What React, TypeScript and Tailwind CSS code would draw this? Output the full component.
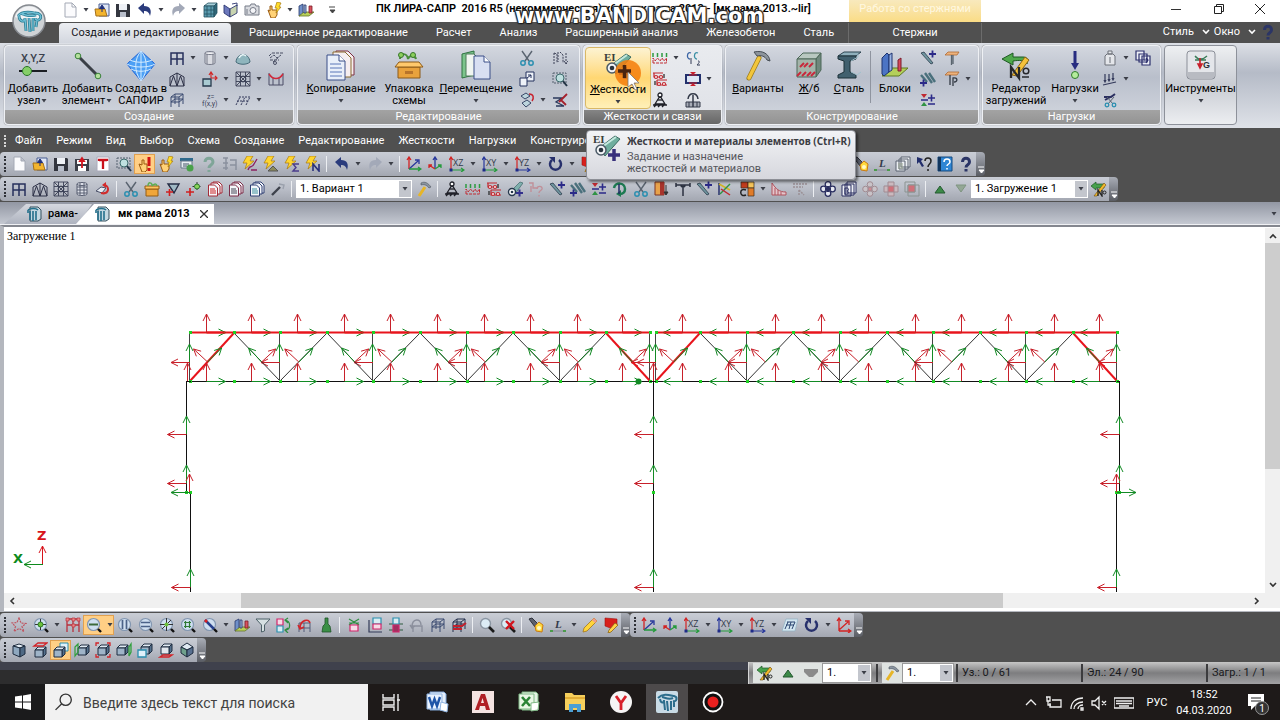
import { FC, ReactNode } from "react";

// Shared pieces for the small toolbar icons (16x16 box)
const Cube: FC<{ dx?: number; dy?: number; fill?: string }> = ({ dx = 0, dy = 0, fill = "#9fb4c8" }) => (
  <g transform={`translate(${dx} ${dy})`} stroke="#1f2d40" strokeWidth="1" strokeLinejoin="round">
    <path d="M3 6l3-3h8l-3 3z" fill="#dfe9f2" />
    <path d="M11 6l3-3v7l-3 3z" fill="#54708c" />
    <path d="M3 6h8v7H3z" fill={fill} />
  </g>
);

const Lens: FC<{ children?: ReactNode }> = ({ children }) => (
  <g>
    <circle cx="7.500" cy="7.500" r="6" fill="#cfdff0" stroke="#8296b0" strokeWidth="1.200" />
    {children}
    <path d="M12 12l3 3" stroke="#111" strokeWidth="2.400" />
  </g>
);

const Axes: FC<{ up: string; right: string; label?: string }> = ({ up, right, label }) => (
  <g fill="none" strokeWidth="1.200">
    <path d="M2 14V2M0 4l2-3 2 3" stroke={up} />
    <path d="M2 14h12M12 12l3 2-3 2" stroke={right} />
    <rect x=".5" y="12.500" width="3" height="3" fill="#1e2b88" />
    {label && (
      <text x="4" y="10" fontSize="9" fill="#333a4a" fontFamily="Open Sans">
        {label}
      </text>
    )}
  </g>
);

const Flash = () => <path d="M5 0h6L8 5h4L3 13l2-6H1z" fill="#ffd52e" stroke="#a87a10" strokeWidth=".7" />;

const Frame: FC<{ color?: string }> = ({ color = "#3a4a70" }) => (
  <path d="M2 15V5l4-3h8v10M2 5h8v10M6 2v10M10 5l4-3M2 10h8l4-3M2 10l4-3h8" fill="none" stroke={color} />
);

const Pages: FC<{ back: string; lines: string }> = ({ back, lines }) => (
  <g fill="#f4f6fa" stroke={back}>
    <path d="M6 1h6l3 3v8H6z" />
    <path d="M4 2h6l3 3v8H4z" />
    <path d="M1.500 4h6l3 3v8h-9z" />
    <path d="M3 8h5M3 10h6M3 12h6" stroke={lines} />
  </g>
);

const icons: Record<string, ReactNode> = {
  page: <path d="M3 1h7l4 4v10H3zM10 1v4h4" fill="#fbfbfd" stroke="#a4a9b5" />,
  open: (
    <g>
      <path d="M5 2h10v12H5z" fill="#dfe6f5" stroke="#4b5f94" />
      <path d="M1 7h10l2 7H2z" fill="#f3b52f" stroke="#a4701a" />
      <path d="M8 10V5M5.500 6.500L8 3l2.500 3.500z" fill="#20307c" stroke="#20307c" />
    </g>
  ),
  save: (
    <g>
      <path d="M1 2h13l1 1v12H1z" fill="#33363f" />
      <path d="M4 2h8v6H4z" fill="#eef1f6" />
      <path d="M5 10h6v5H5z" fill="#b9bfcc" />
    </g>
  ),
  saveModel: (
    <g>
      <path d="M1 3h14v12H1z" fill="#3c3f49" />
      <path d="M3 4h10v4H3zM4 10h8v5H4z" fill="#fff" />
      <path d="M8 12V4M6 5l2-3 2 3z" fill="#d2151f" stroke="#d2151f" strokeWidth="1.800" />
    </g>
  ),
  textPage: (
    <g>
      <path d="M2 1h12v14H2z" fill="#fff" stroke="#aab" />
      <path d="M4 5V4h8v1M8 4v9" fill="none" stroke="#c9101a" strokeWidth="2.300" />
    </g>
  ),
  zoomArea: (
    <g fill="none">
      <path d="M1 2h13v10H1z" stroke="#54616f" strokeDasharray="2 1" />
      <circle cx="8" cy="7" r="4" fill="#bfe0e0" stroke="#3c6a6c" />
      <path d="M11 10l4 5" stroke="#234" strokeWidth="2" />
    </g>
  ),
  handStop: (
    <g>
      <path d="M2 8l3 1V4h2v4h3v6l-2 2H5z" fill="#ffd277" stroke="#9a5a10" />
      <path d="M12 1v9M12 12v3" stroke="#d21414" strokeWidth="3" />
    </g>
  ),
  handFlash: (
    <g>
      <path d="M2 8l2 1V4h2v4h5v5l-2 3H5z" fill="#ffd277" stroke="#9a5a10" />
      <path d="M11 0l4 1-2 4h2l-5 6 1-5H9z" fill="#ffdd2a" stroke="#a87a10" strokeWidth=".7" />
    </g>
  ),
  tableGo: (
    <g>
      <path d="M1 2h13v3H1z" fill="#2f6a8d" />
      <path d="M2 5h11v7H2z" fill="#e8eef2" stroke="#678" />
      <circle cx="11" cy="12" r="3.500" fill="#49a14a" />
      <path d="M4 8h6M4 10h4" stroke="#456" />
    </g>
  ),
  helpFaded: <path d="M5 6c0-5 8-5 8 0 0 3-4 3-4 6M9 14v2" fill="none" stroke="#7fa598" strokeWidth="3" />,
  listFaded: <path d="M2 2h5M2 7h5M2 12h5M9 4h6v10M9 9h6M5 2v12" fill="none" stroke="#8b919f" strokeWidth="1.500" />,
  flashV: (
    <g>
      <Flash />
      <path d="M6 14c2-6 4-1 6-6l3-5M9 14h6" fill="none" stroke="#8a2060" strokeWidth="1.300" />
    </g>
  ),
  flashTri: (
    <g>
      <Flash />
      <path d="M5 15l5-5 5 5z" fill="#8b8a5a" stroke="#555" />
    </g>
  ),
  flashSum: (
    <g>
      <Flash />
      <path d="M15 8H9l3 3.500L9 15h6" fill="none" stroke="#4a3d8c" strokeWidth="1.400" />
    </g>
  ),
  flashN: (
    <g>
      <Flash />
      <path d="M8 15V8l6 7V8" fill="none" stroke="#28307c" strokeWidth="1.600" />
    </g>
  ),
  undo: <path d="M1 6l6-5v3c6 0 8 4 6 10-1-4-3-5-6-5v3z" fill="#2a3b7c" />,
  redo: <path d="M15 6L9 1v3C3 4 1 8 3 14c1-4 3-5 6-5v3z" fill="#a3a9b8" />,
  axes: (
    <g fill="none" strokeWidth="1.300">
      <path d="M3 13V2M1 4l2-3 2 3" stroke="#d22323" />
      <path d="M3 13l9-8M9 4h4v4" stroke="#28389c" />
      <path d="M3 13h11M12 11l3 2-3 2" stroke="#259b3c" />
    </g>
  ),
  axesDown: (
    <g fill="none" strokeWidth="1.300">
      <path d="M8 12V2M6 4l2-3 2 3" stroke="#28389c" />
      <path d="M8 13l-6-4M2 12V9h3" stroke="#d22323" />
      <path d="M8 13l6-4M14 12V9h-3" stroke="#259b3c" />
    </g>
  ),
  axesRed: (
    <g fill="none" strokeWidth="1.300" stroke="#d22323">
      <path d="M3 14V2M1 4l2-3 2 3M3 13l9-8M9 4h4v4M3 14h11M12 12l3 2-3 2" />
    </g>
  ),
  xz: <Axes up="#d22323" right="#259b3c" label="XZ" />,
  xy: <Axes up="#28389c" right="#259b3c" label="XY" />,
  yz: <Axes up="#d22323" right="#28389c" label="YZ" />,
  rotate: (
    <g>
      <path d="M4 4a5.500 5.500 0 107 0" fill="none" stroke="#27306c" strokeWidth="2.500" />
      <path d="M1 1h6v6z" fill="#27306c" />
    </g>
  ),
  pencilRed: (
    <g>
      <path d="M2 1l12 1v6l-4 4-8-3z" fill="#d8201c" stroke="#a01212" strokeWidth=".6" />
      <path d="M12 6l3 2-7 7-3 1 1-3z" fill="#ffd24a" stroke="#8c6413" strokeWidth=".8" />
    </g>
  ),
  torch: (
    <g>
      <path d="M1 2l3-1 6 6-3 3z" fill="#5c606c" stroke="#30333c" />
      <path d="M7 9l4-4 4 3-1 7-6-1z" fill="#ffd93d" stroke="#c97a12" />
      <circle cx="11" cy="11" r="2" fill="#fff8c8" />
    </g>
  ),
  length: (
    <g>
      <text x="5" y="11" fontSize="11" fontStyle="italic" fontFamily="Liberation Serif" fontWeight="bold" fill="#333a4a">
        L
      </text>
      <path d="M2 14h12" stroke="#889" />
      <path d="M0 13h3v2H0zM13 13h3v2h-3z" fill="#4b9b4b" />
    </g>
  ),
  windows: (
    <g fill="#eceff3" stroke="#5b6270">
      <path d="M6 1h9v10H6zM4 3h9v10H4zM1 5h9v10H1z" />
      <path d="M3 8h5M3 10h5M3 12h5" stroke="#97a38f" />
    </g>
  ),
  arrowHelp: (
    <g>
      <path d="M1 1l6 2-2 2 3 5-2 1-3-5-2 2z" fill="#222e6c" />
      <path d="M9 5c0-4 6-4 6 0 0 3-3 3-3 6M12 13v2" fill="none" stroke="#222" strokeWidth="1.500" />
    </g>
  ),
  bookHelp: (
    <g>
      <path d="M1 1h14v14H1z" fill="#2f86d4" stroke="#174a80" />
      <path d="M1 1h3v14H1z" fill="#12375f" />
      <path d="M7 6c0-4 6-4 6 0 0 2-3 2-3 4M10 12v1.500" fill="none" stroke="#fff" strokeWidth="1.500" />
    </g>
  ),
  help: <path d="M4.500 6c0-5 7-5 7 0 0 3-3.500 2.500-3.500 5.500M8 13v2.500" fill="none" stroke="#2b3566" strokeWidth="3" />,
  grid: (
    <g fill="none" stroke="#27305c" strokeWidth="1.500">
      <path d="M2 15V3h12v12M8 3v12M2 9h12" />
    </g>
  ),
  truss: <path d="M1 15V6l7-4 7 4v9M1 15L4.500 5 8 15l3.500-10L15 15M1 15h14M8 2v13" fill="none" stroke="#2b2f45" />,
  mesh: (
    <g fill="none" stroke="#3a3f55" strokeWidth=".9">
      <path d="M1 1h14v14H1zM1 5.500h14M1 10.500h14M5.500 1v14M10.500 1v14M1 1l14 14M15 1L1 15" />
      <circle cx="8" cy="8" r="3" />
    </g>
  ),
  cylinder: (
    <g fill="#dfe2ea" stroke="#4c5266" strokeWidth=".9">
      <path d="M3 3c0-2 10-2 10 0v10c0 2-10 2-10 0z" />
      <path d="M3 6h10M3 9h10M3 12h10M6 2v12M10 2v12M3 3c0 2 10 2 10 0" fill="none" />
    </g>
  ),
  tube: (
    <g stroke="#6c7080" strokeWidth=".9">
      <path d="M3 3c0-2 10-2 10 0v10c0 2-10 2-10 0z" fill="#d9dbe1" />
      <path d="M3 3c0 2 10 2 10 0" fill="#f5f6f8" />
      <path d="M5 4v10M11 4v10" />
    </g>
  ),
  dome: (
    <g>
      <path d="M1 12C2 2 14 2 15 12c-3 3-11 3-14 0z" fill="#8fb5bd" stroke="#466a78" />
      <path d="M4 8c2-4 5-4 7-2" fill="none" stroke="#e8f5f7" strokeWidth="1.500" />
    </g>
  ),
  revolve: (
    <g>
      <path d="M1 10l5-4 5 1-4 5z" fill="#e8ecf2" stroke="#4a5068" />
      <path d="M6 12c8 2 9-6 4-8" fill="none" stroke="#d22b2b" strokeWidth="2" />
      <path d="M11 1L7 4l4 3z" fill="#d22b2b" />
    </g>
  ),
  nodes: (
    <g fill="none" stroke="#3c4258" strokeWidth=".9">
      <path d="M4 3h11M1 6l3-3M2 8l4-3 3 3 4-3M2 10h9M5 12l6-5" strokeDasharray="3 1" />
      <circle cx="7" cy="13" r="1.500" />
    </g>
  ),
  cubeMove: (
    <g>
      <path d="M1 8h8v7H1z" fill="#a9cbd2" stroke="#26394c" strokeWidth="1.300" />
      <path d="M9 7V2M7 4l2-3 2 3M9 7h6M13 5l2 2-2 2" fill="none" stroke="#d02828" strokeWidth="1.200" />
    </g>
  ),
  arch: (
    <g fill="none">
      <path d="M1 2v12h14V2M5 7v7M11 7v7" stroke="#4a4c66" />
      <path d="M1 3c4 6 10 6 14 0" stroke="#d0283a" strokeWidth="1.500" />
    </g>
  ),
  formula: (
    <g fill="#3c4358" fontFamily="Roboto" fontSize="7">
      <text x="5" y="7">z=</text>
      <text x="0" y="14">f(x,y)</text>
    </g>
  ),
  slab: <path d="M4 5h11M1 13L5 5M6 13l4-8M11 13l4-8M2 9h12" fill="none" stroke="#33395a" strokeDasharray="2 1" />,
  scissors: (
    <g fill="none">
      <path d="M3 1l7 10M13 1L6 11" stroke="#5a6470" strokeWidth="1.400" />
      <circle cx="4" cy="13" r="2.200" stroke="#2c8fb0" strokeWidth="1.500" />
      <circle cx="12" cy="13" r="2.200" stroke="#2c8fb0" strokeWidth="1.500" />
    </g>
  ),
  box: (
    <g>
      <path d="M2 8h12v7H2z" fill="#f0a63a" stroke="#945d14" />
      <path d="M1 5h14v3H1z" fill="#ffc45e" stroke="#945d14" />
      <path d="M4 5c0-5 4-3 4-1s4-4 5 1" fill="none" stroke="#5fae52" strokeWidth="1.500" />
    </g>
  ),
  triMark: (
    <g>
      <path d="M3 3h11L9 12z" fill="#9fb8c4" stroke="#242c44" strokeWidth="1.400" />
      <path d="M1 11h7M4.500 8v7" stroke="#d02020" strokeWidth="1.600" />
    </g>
  ),
  nodePlus: (
    <g>
      <path d="M11 1v9M6.500 5.500h9" stroke="#333" strokeDasharray="2 1" />
      <circle cx="11" cy="5.500" r="2.500" fill="#8bd45c" stroke="#2b7a28" />
      <path d="M0 11h8M4 7v8" stroke="#d02020" strokeWidth="1.600" />
    </g>
  ),
  copyRed: <Pages back="#a42c38" lines="#c22" />,
  copyDark: <Pages back="#7c2c48" lines="#445" />,
  copyBlue: <Pages back="#2e3f73" lines="#3b8f9c" />,
  brush: (
    <g fill="none">
      <path d="M2 14l8-8" stroke="#3e424c" strokeWidth="2.400" />
      <path d="M9 3l5 1-1 4" stroke="#9aa0ac" strokeWidth="1.400" />
    </g>
  ),
  hammer: (
    <g>
      <path d="M3 15l6-9" stroke="#e6b528" strokeWidth="3" />
      <path d="M5 2c4-2 7 0 10 4l-2 1c-2-3-5-4-8-3z" fill="#8a94a0" stroke="#4c545e" strokeWidth=".6" />
    </g>
  ),
  support: (
    <g fill="none" stroke="#1f2028" strokeWidth="1.300">
      <path d="M8 4L3 12h10zM1 13h14M2 15l2-2M6 15l2-2M10 15l2-2" />
      <circle cx="8" cy="3" r="2" fill="#fff" />
      <path d="M5.500 8h5" />
    </g>
  ),
  loadTop: (
    <g fill="none">
      <path d="M1 7V3M5.500 7V3M10 7V3M14.500 7V3" stroke="#2e9b42" strokeWidth="1.500" />
      <path d="M1 13V8l2 3 2.500-3L8 11l2-3 2 3 2.500-3v5z" stroke="#c02a32" strokeDasharray="3 1" />
    </g>
  ),
  springs: (
    <g fill="none" stroke="#c2272f" strokeWidth="1.200">
      <path d="M1 2h10M2 2v4h9M5 9h10M5 9v5h10" />
      <circle cx="4" cy="6" r="1.500" fill="#fff" />
      <circle cx="9" cy="6" r="1.500" fill="#fff" />
      <circle cx="7" cy="13" r="1.500" fill="#fff" />
      <circle cx="12" cy="13" r="1.500" fill="#fff" />
      <path d="M12 3v4M3 10v4" stroke="#222" />
    </g>
  ),
  ei: (
    <g>
      <path d="M4 10l9-9 3 1-8 11z" fill="#7fb0ae" stroke="#3d6668" strokeWidth=".7" />
      <circle cx="5" cy="11" r="3.500" fill="#fff" stroke="#26384c" strokeWidth="1.400" />
      <circle cx="5" cy="11" r="1.300" fill="#26384c" />
      <path d="M9 12h7M12.500 8.500v7" stroke="#33308c" strokeWidth="2" />
    </g>
  ),
  hingeFaded: (
    <g fill="none" stroke="#c08f98" strokeWidth="1.400">
      <path d="M1 2h4v5h5M3 5v6M9 8c0-4 6-3 5 0-1 2-3 2-3 4M11 14v1.500" />
    </g>
  ),
  barPlus: (
    <g>
      <path d="M1 3l3-1 9 11-2 1z" fill="#6f959f" stroke="#2c3c4c" strokeWidth=".8" />
      <path d="M9 4h7M12.500 .5v7" stroke="#2b2a88" strokeWidth="1.800" />
    </g>
  ),
  hatchPlus: (
    <g>
      <path d="M1 4l6 7M5 2l7 10M9 2l6 9" stroke="#4a707c" strokeWidth="2.400" />
      <path d="M0 12h7M3.500 8.500v7" stroke="#2b2a88" strokeWidth="1.800" />
    </g>
  ),
  plusMinus: (
    <g>
      <path d="M1 2h6L4 6z" fill="#c02a32" />
      <path d="M1 14h6l-3-4z" fill="#2f9344" />
      <path d="M1 8h7M8 12h7M8 6h7M11.500 2.500v7" stroke="#2b2a88" strokeWidth="1.600" />
    </g>
  ),
  turn: (
    <g>
      <path d="M2 7c1-6 11-6 11 1 0 3-2 5-5 5" fill="none" stroke="#1d7a52" strokeWidth="2.500" />
      <path d="M9 9v7l-5-3z" fill="#1d7a52" />
      <path d="M7 3v10" stroke="#222a66" strokeWidth="1.500" />
    </g>
  ),
  gradient: (
    <g>
      <path d="M1 1h9v13H1z" fill="#e8a24a" stroke="#7c3422" />
      <path d="M6 1h4v13H6z" fill="#a8342c" />
      <path d="M12 4v9M10 11l2 3 2-3z" fill="#333" stroke="#333" />
    </g>
  ),
  tJoint: <path d="M1 4h14M1 2v4M15 2v4M8 4v11M6 4a2 2 0 104 0" fill="none" stroke="#2b3140" strokeWidth="1.500" />,
  colorBars: (
    <g fill="none" strokeWidth="1.500">
      <path d="M2 2v12" stroke="#27306c" />
      <path d="M2 3l11 6" stroke="#d2b522" />
      <path d="M3 13L13 3" stroke="#2f9344" />
      <path d="M4 8l9 6" stroke="#c02a32" />
    </g>
  ),
  palette: (
    <g stroke="#3a2c1c" strokeWidth=".7">
      <path d="M2 1h7v6H2z" fill="#c13c1c" />
      <path d="M9 1h6v6H9z" fill="#f6c55a" />
      <path d="M9 7h6v8H9z" fill="#e07b28" />
      <path d="M7 9c-7-3-7 8 0 5" fill="none" stroke="#222" strokeWidth="1.500" />
    </g>
  ),
  chart: <path d="M1 2v12h14v-3c-7 0-10-3-14-9M4 7v7M7 9v5M10 11v3" fill="#e3c6cc" stroke="#b0525c" />,
  dotted: <path d="M1 3h14M1 6h10M7 9l5 5M7 9v5" fill="none" stroke="#9b9095" strokeWidth="1.500" strokeDasharray="2 1" />,
  crossDots: (
    <g fill="#e8eaf2" stroke="#2b2f60" strokeWidth="1.300">
      <circle cx="8" cy="3.500" r="2.800" />
      <circle cx="8" cy="12.500" r="2.800" />
      <circle cx="3.500" cy="8" r="2.800" />
      <circle cx="12.500" cy="8" r="2.800" />
      <path d="M5 8h6M8 5v6" strokeWidth="2" />
    </g>
  ),
  bBook: (
    <g fill="#eef0f5" stroke="#2b2f60">
      <path d="M6 1h9v11H6zM4 3h9v11H4zM1 4h9v11H1z" />
      <path d="M4 7v6h2c2 0 2-3 0-3 2 0 2-3 0-3z" fill="none" />
    </g>
  ),
  crossFaded: (
    <g fill="#c9c3c8" stroke="#a08b92">
      <circle cx="8" cy="3.500" r="2.800" />
      <circle cx="8" cy="12.500" r="2.800" />
      <circle cx="3.500" cy="8" r="2.800" />
      <circle cx="12.500" cy="8" r="2.800" />
      <circle cx="8" cy="8" r="2" fill="#d08a90" />
    </g>
  ),
  crossRed: (
    <g fill="#cbb9be" stroke="#a08b92">
      <path d="M5 1h6v4h4v6h-4v4H5v-4H1V5h4z" />
      <path d="M5 5h6v6H5z" fill="#cf7079" />
    </g>
  ),
  stackRed: (
    <g fill="none" stroke="#8b9391">
      <path d="M1 1h10v10H1zM4 4h11v11H4z" />
      <path d="M4 4h7v7H4z" fill="#cf7079" />
    </g>
  ),
  up: <path d="M3 12l5-7 5 7z" fill="#3c8a48" stroke="#245a30" />,
  down: <path d="M3 4h10l-5 7z" fill="#93a795" stroke="#7f9581" />,
  downGray: <path d="M1 4h14v3l-5 5H6L1 7z" fill="#8b8b8b" />,
  loadNo: (
    <g>
      <path d="M0 5l5-4v2h8v4H5v2z" fill="#46a04c" stroke="#1c5a26" strokeWidth=".7" />
      <path d="M3 15L13 2l2 2L6 15z" fill="#f2b92c" stroke="#6c4a10" strokeWidth=".6" />
      <path d="M7 15V9l4 6V9" fill="none" stroke="#222" strokeWidth="1.300" />
      <circle cx="13.500" cy="11.500" r="1.500" fill="none" stroke="#222" />
    </g>
  ),
  star: <path d="M8 1l2 5 5 .5-4 3 2 5-5-3-5 3 1.500-5L1 6l5-.5z" fill="none" stroke="#bf5560" strokeDasharray="2 1" strokeWidth="1.200" />,
  lensNode: (
    <Lens>
      <path d="M2 7.500h11M7.500 2v11" stroke="#333" />
      <circle cx="7.500" cy="7.500" r="2.500" fill="#6cc23c" stroke="#2b7a28" />
    </Lens>
  ),
  gridRed: (
    <g fill="none">
      <path d="M2 15V2h12v13M8 2v13M2 8h12" stroke="#b8303c" strokeWidth="1.300" />
      <path d="M1 1h3v3H1zM7 1h3v3H7zM12 1h3v3h-3zM7 7h3v3H7z" fill="#e88" stroke="#b8303c" strokeWidth=".7" />
    </g>
  ),
  lensMinus: (
    <Lens>
      <path d="M3 7.500h9" stroke="#3c6a3a" strokeWidth="2" />
    </Lens>
  ),
  lensV: (
    <Lens>
      <path d="M5.500 3v9M9.500 3v9" stroke="#4a6288" strokeWidth="1.700" />
    </Lens>
  ),
  lensH: (
    <Lens>
      <path d="M3 5.500h9M3 9.500h9" stroke="#4a6288" strokeWidth="1.700" />
    </Lens>
  ),
  lensCross: (
    <Lens>
      <path d="M1 7.500h13M7.500 1v13M3 12l9-9" stroke="#333" />
      <circle cx="7.500" cy="7.500" r="2" fill="#6cc23c" />
    </Lens>
  ),
  lensGrid: (
    <Lens>
      <path d="M4 5.500h7M4 9.500h7M5.500 4v7M9.500 4v7" stroke="#2f7a35" strokeWidth="1.200" />
    </Lens>
  ),
  lensBar: (
    <Lens>
      <path d="M3 3l9 9" stroke="#27408c" strokeWidth="2.500" />
      <path d="M3 3l2 2" stroke="#d22" strokeWidth="2.500" />
    </Lens>
  ),
  blocks: (
    <g strokeWidth=".8">
      <path d="M1 4l4-2v10l-4 2z" fill="#6f8fc8" stroke="#27386c" />
      <path d="M1 14h10l5-4H6z" fill="#b8cf58" stroke="#66772a" />
      <path d="M6 3h2v8H6z" fill="#9fb6dd" stroke="#27386c" />
      <path d="M11 4h3v7h-3z" fill="#d8525c" stroke="#7c1c28" />
    </g>
  ),
  funnel: <path d="M1 2h14l-5.500 6v6l-3 1V8z" fill="#d6e0e2" stroke="#4d6168" />,
  swap: (
    <g fill="none" strokeWidth="1.200">
      <path d="M1 2h6v6H1z" stroke="#d2256a" fill="#f6dbe6" />
      <path d="M1 9h6v6H1z" stroke="#2b8fae" fill="#d9edf3" />
      <path d="M9 3c6 1 6 9 1 10M12 1L9 3l3 3M12 11l-3 2 3 3" stroke="#2f8c40" />
    </g>
  ),
  frameUndo: (
    <g fill="none">
      <path d="M2 15V6h11v9M7 6v9M2 11h11" stroke="#555d78" />
      <path d="M3 11c0-8 9-10 10-5M1 8l2 4 4-2" stroke="#d2252a" strokeWidth="1.600" />
    </g>
  ),
  brushGreen: <path d="M7 1h3v6l2 2 1 6H4l1-6 2-2z" fill="#3b8f46" stroke="#1f5428" strokeWidth=".8" />,
  frameX: (
    <g fill="none" strokeWidth="1.200">
      <path d="M3 6h10M3 2l10 6M13 2L3 8" stroke="#2f8c40" />
      <path d="M4 8h8v6H4z" stroke="#d2256a" fill="#f6dbe6" />
    </g>
  ),
  frameAxes: (
    <g fill="none" strokeWidth="1.200">
      <path d="M2 3v12h13" stroke="#333a58" />
      <path d="M6 1h8v6H6z" stroke="#2b8fae" fill="#d9edf3" />
      <path d="M6 7h8v5H6z" stroke="#d2256a" fill="#f6dbe6" />
    </g>
  ),
  frameMid: (
    <g fill="none" strokeWidth="1.200">
      <path d="M1 7h14M1 13h14" stroke="#2f5c40" />
      <path d="M5 1h6v6H5z" stroke="#2b8fae" fill="#d9edf3" />
      <path d="M5 8h6v7H5z" stroke="#d2256a" fill="#a03060" />
    </g>
  ),
  frameFaded: <path d="M4 15V9h9v6M3 10c0-9 9-9 9-2M1 8l2 3 3-2" fill="none" stroke="#8b8f9c" strokeWidth="1.400" />,
  frame3d: <Frame />,
  frame3dRed: (
    <g>
      <Frame color="#24304c" />
      <path d="M2 9h9l4-3M2 12h9" stroke="#c3202c" strokeWidth="2" fill="none" />
    </g>
  ),
  lens: (
    <g>
      <circle cx="6.500" cy="6.500" r="5" fill="#dcecf6" stroke="#8b96a3" strokeWidth="1.400" />
      <path d="M10 10l5 5" stroke="#1a1a1a" strokeWidth="2.600" />
    </g>
  ),
  lensX: (
    <g>
      <circle cx="6.500" cy="6.500" r="5" fill="#dcecf6" stroke="#8b96a3" strokeWidth="1.400" />
      <path d="M10 10l5 5" stroke="#1a1a1a" strokeWidth="2.600" />
      <path d="M6 4l8 8M14 4l-8 8" stroke="#d2151f" strokeWidth="2.400" />
    </g>
  ),
  pencil: (
    <g>
      <path d="M12 1l3 3L5 14l-4 1 1-4z" fill="#ffd53a" stroke="#a4761a" strokeWidth=".8" />
      <path d="M12 1l3 3-2 2-3-3z" fill="#f09c8c" />
    </g>
  ),
  sheet: (
    <g>
      <path d="M4 2h12l-3 12H0z" fill="#d3e6f0" stroke="#8fb0c2" strokeWidth=".7" />
      <path d="M5 5h8M4 8h8M3 12l3-7M7 12l2-7M10 12l3-7" stroke="#2b4570" fill="none" />
    </g>
  ),
  cube: (
    <g stroke="#1f2d40" strokeLinejoin="round">
      <path d="M2 4l6-2 6 2-5 2z" fill="#e4edf5" />
      <path d="M2 4l7 2v9l-7-3z" fill="#8fa8bf" />
      <path d="M9 6l5-2v8l-5 3z" fill="#4f6984" />
    </g>
  ),
  cubeTop: (
    <g>
      <Cube dy={2} />
      <path d="M2 4l4-3h9l-4 3z" fill="none" stroke="#d2252a" strokeWidth="1.300" />
    </g>
  ),
  cubeBack: (
    <g>
      <path d="M7 1h8v8H7z" fill="#dff1fa" stroke="#2b8fae" />
      <Cube dx={-2} dy={2} />
    </g>
  ),
  cubeLeft: (
    <g>
      <Cube dx={1} />
      <path d="M1 5l3-3v8l-3 4z" fill="none" stroke="#2fa03c" strokeWidth="1.200" />
    </g>
  ),
  cubeBox: (
    <g>
      <Cube />
      <path d="M1 4V1h3M12 1h3v3M15 12v3h-3M4 15H1v-3" fill="none" stroke="#d2252a" strokeWidth="1.300" />
    </g>
  ),
  cubeRight: (
    <g>
      <Cube dx={-2} />
      <path d="M13 5l2-3v8l-2 4z" fill="none" stroke="#2fa03c" strokeWidth="1.300" />
    </g>
  ),
  cubeFront: (
    <g>
      <Cube dx={1} dy={-1} />
      <path d="M1 8h8v7H1z" fill="#dff1fa" stroke="#2b8fae" strokeWidth="1.300" />
    </g>
  ),
  cubeBottom: (
    <g>
      <Cube dy={-1} fill="#e2e7ee" />
      <path d="M2 15l3-2h9l-3 2z" fill="none" stroke="#d2252a" strokeWidth="1.300" />
    </g>
  ),
  cubeHex: (
    <g stroke="#1f2d40" strokeLinejoin="round">
      <path d="M8 1l6 4-6 3-6-3z" fill="#dfe9f2" />
      <path d="M2 5l6 3v7l-6-4z" fill="#6fa08c" />
      <path d="M14 5L8 8v7l6-4z" fill="#587090" />
    </g>
  ),
  building: (
    <g stroke="#24505f" strokeWidth=".8">
      <path d="M2 4l4-3h9l-3 3z" fill="#a8d0da" />
      <path d="M2 4h10v11H2z" fill="#5c9cb0" />
      <path d="M12 4l3-3v10l-3 4z" fill="#2f6678" />
      <path d="M5 4v11M9 4v11M2 8h10M2 12h10" />
    </g>
  ),
  book: (
    <g stroke="#2b3570" strokeWidth=".9">
      <path d="M1 3l6 4v8l-6-4z" fill="#6c78bc" />
      <path d="M7 7l7-4v8l-7 4z" fill="#c8d4b0" />
      <path d="M9 2l5-1v3" fill="none" />
    </g>
  ),
  camera: (
    <g stroke="#777c88">
      <path d="M1 4h5l1-2h4l1 2h3v9H1z" fill="#d9dbe0" />
      <circle cx="9" cy="8.500" r="3" fill="#f4f5f8" />
      <path d="M3 7v5" />
    </g>
  ),
  paste: (
    <g stroke="#23305c" fill="#eef2f8">
      <path d="M7 1h8v9H7z" />
      <path d="M1 7h7v8H1z" />
      <path d="M8 7l4-3M12 7V4H9" fill="none" />
    </g>
  ),
  rotateCopy: (
    <g stroke="#2b3a5c" fill="#bcd4dc" strokeWidth=".9">
      <path d="M2 4l5-3 4 3-5 3zM3 11l5-3 4 3-5 4z" />
      <path d="M10 2c5 0 5 4 3 7" fill="none" stroke="#c8202c" strokeWidth="1.500" />
    </g>
  ),
  strip: <path d="M2 3v11M2 3l3 1v9M6 2v10M8 2l3 3v8M14 3v11M12 11l2 3 2-3" fill="none" stroke="#3a3f55" strokeDasharray="2 1" />,
  clean: (
    <g fill="none">
      <path d="M1 6h9l-6 4 8 4H4" stroke="#2b3a5c" strokeWidth="1.300" />
      <path d="M15 2L7 10M9 8l5 5" stroke="#a5202c" strokeWidth="1.800" />
    </g>
  ),
  cc: (
    <g fill="none" strokeWidth="1.300">
      <path d="M6 3C2 1 1 9 5 9" stroke="#3a64a4" />
      <path d="M13 3C9 1 8 9 12 9" stroke="#3a8fa4" />
      <path d="M6 8v6M13 11c3 0 0 3-1 4h3" stroke="#333a55" strokeWidth="1" />
    </g>
  ),
  plate: (
    <g>
      <path d="M1 4h14v8H1z" fill="#dce6f4" stroke="#23306c" strokeWidth="2" />
      <path d="M5 1h6L8 4zM5 15h6l-3-3z" fill="#c8202c" />
      <path d="M4 4h8M4 12h8" stroke="#c8202c" />
    </g>
  ),
  springBase: (
    <g fill="none" stroke="#333948">
      <path d="M1 10h14M1 10v5h14v-5M4 10v5M12 10v5" fill="#a7abb6" />
      <path d="M3 7c1-7 9-7 10 0M8 3v12" strokeWidth="1.500" />
    </g>
  ),
  tOrange: (
    <g>
      <path d="M1 5l3-3h11l-2 3z" fill="#ecb27c" stroke="#b06a34" strokeWidth=".8" />
      <path d="M7.500 5v10M9 5v9" stroke="#59646e" strokeWidth="1.300" />
    </g>
  ),
  ipOrange: (
    <g>
      <path d="M1 4l3-3h11l-2 3z" fill="#ecb27c" stroke="#b06a34" strokeWidth=".8" />
      <path d="M6 4v10M9 15V7c5-1 5 4 1 4" stroke="#333a44" fill="none" strokeWidth="1.300" />
    </g>
  ),
  bottle: (
    <g fill="#e4e6ea" stroke="#6c7078">
      <path d="M3 6l2-2h6l2 2v9H3zM6 1h4v3H6z" />
      <path d="M8 7v6" />
    </g>
  ),
  loadLine: <path d="M3 3v8M7 3v7M11 2v7M2 9l1 2 1-2M6 8l1 2 1-2M10 7l1 2 1-2M1 14l13-3" fill="none" stroke="#33395a" strokeWidth="1.200" />,
  cutLoad: (
    <g fill="none">
      <path d="M2 5h7l4-3M3 8l9-5" stroke="#2b2f60" strokeWidth="2" />
      <path d="M5 5l6 7M12 5l-6 7" stroke="#5a6470" />
      <circle cx="5" cy="13" r="1.800" stroke="#2c8fb0" strokeWidth="1.300" />
      <circle cx="12" cy="13" r="1.800" stroke="#2c8fb0" strokeWidth="1.300" />
    </g>
  ),
  copyFrames: (
    <g fill="#eceef6" stroke="#2b2f6c" strokeWidth="1.200">
      <path d="M1 1h8v9H1zM4 4h8v8H4zM7 6h8v9H7z" />
      <path d="M9 10h4M11 8l2 2-2 3" fill="none" />
    </g>
  ),
};

// Ribbon-size icons (32x32 box)
const bigIcons: Record<string, ReactNode> = {
  node: (
    <g>
      <text x="16" y="12" textAnchor="middle" fontSize="11" fill="#3a3f4c" fontFamily="Roboto" fontWeight="500">
        X,Y,Z
      </text>
      <path d="M2 21h28M10 16v10" stroke="#1c1f24" strokeWidth="2" />
      <circle cx="10" cy="21" r="4.500" fill="#86cf68" stroke="#2f7a2c" />
    </g>
  ),
  element: (
    <g>
      <path d="M6 6l20 20" stroke="#3a3f46" strokeWidth="3" />
      <circle cx="6" cy="6" r="2.800" fill="#b4e09c" stroke="#39803a" />
      <circle cx="26" cy="26" r="2.800" fill="#b4e09c" stroke="#39803a" />
    </g>
  ),
  sapfir: (
    <g fill="#4da0f5" stroke="#1d62d8" strokeLinejoin="round">
      <path d="M16 1L2 14l14 17 14-17z" />
      <path d="M2 14c6 4 22 4 28 0M5 10c6 3 16 3 22 0M16 1C9 9 9 22 16 31M16 1c7 8 7 21 0 30M16 1v30M6 19c6 3 14 3 20 0" fill="none" stroke="#d4ecff" />
    </g>
  ),
  copy: (
    <g stroke="#7c2c40" fill="#f6eef0">
      <path d="M11 1h12l6 6v18H11z" />
      <path d="M8 2h12l6 6v19H8z" stroke="#8a6a30" />
      <path d="M2 5h12l6 6v19H2z" fill="#e9effa" stroke="#3a4e88" />
      <path d="M14 5v6h6" fill="#fff" stroke="#3a4e88" />
      <path d="M5 14h11M5 18h12M5 22h12M5 26h12" stroke="#5b76b8" />
    </g>
  ),
  pack: (
    <g>
      <path d="M7 9c0-7 7-6 8 0 1-4 7-4 8 0" fill="none" stroke="#4a8d3a" strokeWidth="2" />
      <circle cx="8" cy="5" r="2.500" fill="#8ccf5c" stroke="#38762c" />
      <circle cx="20" cy="5" r="2.500" fill="#8ccf5c" stroke="#38762c" />
      <path d="M5 17h22v11H5z" fill="#e9a23c" stroke="#8c5a18" />
      <path d="M6 12h20l4 5H2z" fill="#ffc96c" stroke="#8c5a18" />
      <path d="M12 21h8v3h-8z" fill="#b8742a" />
    </g>
  ),
  move: (
    <g>
      <path d="M2 4l12-3v24L2 28z" fill="#7cc48c" stroke="#2f7240" />
      <path d="M6 4h8l4 4v18H6z" fill="#f0f5f0" stroke="#4d7a58" />
      <path d="M14 6h10l6 6v17H14z" fill="#d8dff2" stroke="#3a4e88" />
      <path d="M24 6v6h6" fill="#fff" stroke="#3a4e88" />
    </g>
  ),
  stiffness: (
    <g>
      <text x="2" y="10" fontSize="11" fontFamily="Liberation Serif" fontWeight="bold" fill="#3a3f3c">
        EI
      </text>
      <path d="M8 15L24 3l5 3-15 17z" fill="#6fae9e" stroke="#3c6c62" />
      <path d="M11 14L25 4" stroke="#c4e8de" strokeWidth="2" />
      <circle cx="10" cy="17" r="5" fill="#f2f4f6" stroke="#4b5a66" strokeWidth="1.500" />
      <circle cx="10" cy="17" r="2.300" fill="#27323c" />
      <path d="M17 22h12M23 16v12" stroke="#38307c" strokeWidth="3.500" />
    </g>
  ),
  hammer: (
    <g>
      <path d="M7 28L17 8" stroke="#9c7a1c" strokeWidth="5" strokeLinecap="round" />
      <path d="M7 28L17 8" stroke="#f2c63c" strokeWidth="3.500" strokeLinecap="round" />
      <path d="M12 2c9-2 15 2 16 9l-3-1c-2-4-6-5-10-4z" fill="#8c949c" stroke="#474e56" />
    </g>
  ),
  concrete: (
    <g>
      <path d="M4 9l6-6h18l-5 6z" fill="#b9c8c0" stroke="#4d6858" />
      <path d="M23 9l5-6v17l-5 7z" fill="#6f887c" stroke="#4d6858" />
      <path d="M4 9h19v18H4z" fill="#a4b4aa" stroke="#4d6858" />
      <path d="M7 17l4-4M11 17l4-4M16 17l4-4M4 26l4-4M9 26l4-4M14 26l4-4M18 26l4-4" stroke="#c8283c" strokeWidth="2" />
    </g>
  ),
  steel: (
    <g>
      <path d="M5 6l6-4h17l-5 4z" fill="#8fb0bc" stroke="#2c4450" />
      <path d="M5 6h18v3l-6 2v11l6 3v3H5v-3l6-3V11L5 9z" fill="#41606e" stroke="#1d3038" />
      <path d="M18 11l7-4v-3M18 22l6 3 4-3" stroke="#9fc0cc" fill="none" />
    </g>
  ),
  blocks: (
    <g>
      <path d="M3 26h17l9-8H12z" fill="#b4cf5a" stroke="#5f7a22" />
      <path d="M3 8l5-5 2 2v17l-5 4-2-2z" fill="#4c74c4" stroke="#1e3470" />
      <path d="M10 5l3-2v17l-3 2z" fill="#9ab4e4" stroke="#1e3470" />
      <path d="M19 10l3-2v13h-3z" fill="#d84a5a" stroke="#7a1c2c" />
    </g>
  ),
  loadEditor: (
    <g>
      <path d="M2 9l11-6v4h10c5 0 5 3 4 7-3-4-7-4-14-3v4z" fill="#4fa84c" stroke="#1f5a24" />
      <path d="M12 25L25 7l4 3-12 16z" fill="#f5c23a" stroke="#8c6413" />
      <path d="M11 28V17l8 11V17" fill="none" stroke="#27282c" strokeWidth="2.300" />
      <circle cx="26" cy="21" r="2.800" fill="none" stroke="#27282c" strokeWidth="1.500" />
      <path d="M22 27h7" stroke="#27282c" strokeWidth="1.500" />
    </g>
  ),
  loads: (
    <g>
      <path d="M16 1v15" stroke="#272c80" strokeWidth="3" />
      <path d="M12 13h8l-4 7z" fill="#272c80" />
      <circle cx="16" cy="25" r="3.500" fill="#b4ec9c" stroke="#2f7a2c" />
    </g>
  ),
  tools: (
    <g>
      <rect x="2" y="1" width="28" height="28" rx="3" fill="#e4e6ea" stroke="#8b8f98" />
      <path d="M3 22h26v6H3z" fill="#b8bbc2" />
      <path d="M10 6c3 4 8 4 12 0M10 10h11" stroke="#3c7c5a" fill="none" strokeWidth="1.300" />
      <path d="M15 8v8M13 14l2 4 2-4z" stroke="#c8202c" fill="#c8202c" strokeWidth="1.600" />
      <text x="18" y="18" fontSize="9" fontWeight="bold" fill="#2d3038" fontFamily="Liberation Sans">
        G
      </text>
    </g>
  ),
};

const Icon: FC<{ name: string }> = ({ name }) => (
  <svg className="h-4 w-4 shrink-0" viewBox="0 0 16 16" aria-hidden="true">
    {icons[name]}
  </svg>
);

const Caret = () => (
  <svg className="h-1 w-2 shrink-0 text-[#3b3e47]" viewBox="0 0 8 4" aria-hidden="true">
    <path d="M1.500 0h5L4 3.500z" fill="currentColor" />
  </svg>
);

const Chevron: FC<{ d: string; className?: string }> = ({ d, className = "text-[#333]" }) => (
  <svg className={`h-2 w-2 shrink-0 ${className}`} viewBox="0 0 8 8" aria-hidden="true">
    <path d={d} fill="none" stroke="currentColor" strokeWidth="1.600" />
  </svg>
);

const Sep = () => (
  <div className="flex w-[7px] shrink-0 justify-center">
    <div className="h-4 w-px bg-[#eceef2]"></div>
  </div>
);

// "name" is a button, "name+" a button with a menu, "name!" a pressed one, "|" a separator
const Tools: FC<{ items: string }> = ({ items }) => (
  <>
    {items.split(" ").map((item, i) => {
      if (item === "|") return <Sep key={i} />;
      const name = item.replace(/[+!]/g, "");
      const pressed = item.includes("!");
      if (item.includes("+"))
        return (
          <button
            key={i}
            aria-label={name}
            className={
              pressed
                ? "flex h-5 w-[31px] shrink-0 items-center border border-[#e0a050] bg-[#ffcf85] pl-0.5"
                : "flex h-5 w-[33px] shrink-0 items-center pl-1"
            }
          >
            <Icon name={name} />
            <span className="ml-1">
              <Caret />
            </span>
          </button>
        );
      return (
        <button
          key={i}
          aria-label={name}
          className={
            pressed
              ? "flex h-5 w-[21px] shrink-0 items-center justify-center border border-[#e0a050] bg-[#ffcf85]"
              : "flex h-5 w-[21px] shrink-0 items-center justify-center"
          }
        >
          <Icon name={name} />
        </button>
      );
    })}
  </>
);

const Toolbar: FC<{ children: ReactNode }> = ({ children }) => (
  <div className="flex h-6 shrink-0">
    <div className="flex items-center rounded-l-sm bg-linear-to-b from-[#c9cdd5] via-[#b9bdc7] to-[#a3a7b1]">
      <div className="mr-0.5 ml-1 h-4 w-0 border-l-2 border-dotted border-[#2e3036]"></div>
      {children}
    </div>
    <div className="flex w-[9px] items-end justify-center rounded-r-sm bg-linear-to-b from-[#a9adb6] to-[#5a5d64] pb-0.5">
      <svg className="h-2 w-2" viewBox="0 0 8 8" aria-hidden="true">
        <path d="M1 1h6M2 4h5L4.500 7z" stroke="#fff" fill="#fff" />
      </svg>
    </div>
  </div>
);

const Combo: FC<{ label: string; value: string; className: string }> = ({ label, value, className }) => (
  <div className={`relative shrink-0 ${className}`}>
    <select aria-label={label} className="h-full w-full appearance-none bg-white px-1 text-[11px] leading-4 text-black">
      <option>{value}</option>
    </select>
    <span className="pointer-events-none absolute inset-y-px right-px flex w-3 items-center justify-center bg-[#c3c6cd]">
      <Caret />
    </span>
  </div>
);

type BigProps = { icon: string; lines: string[]; menu?: boolean; hotkey?: boolean; className: string };

const BigButton: FC<BigProps> = ({ icon, lines, menu, hotkey, className }) => (
  <button className={`flex h-[62px] shrink-0 flex-col items-center pt-[3px] whitespace-nowrap ${className}`}>
    <svg className="h-8 w-8 shrink-0" viewBox="0 0 32 32" aria-hidden="true">
      {bigIcons[icon]}
    </svg>
    <span className="leading-[13px]">
      {hotkey ? (
        <>
          <u>{lines[0][0]}</u>
          {lines[0].slice(1)}
        </>
      ) : (
        lines[0]
      )}
    </span>
    <span className="flex h-3 items-center leading-3">
      {lines[1]}
      {menu && <Caret />}
    </span>
  </button>
);

// Columns of small buttons; a trailing "+" means the button has a menu
const SmallGrid: FC<{ columns: string[][] }> = ({ columns }) => (
  <div className="flex shrink-0">
    {columns.map((column, i) => (
      <div key={i} className="flex w-[33px] flex-col">
        {column.map((item) => (
          <button key={item} aria-label={item.replace("+", "")} className="flex h-[21px] items-center gap-1 pl-px">
            <Icon name={item.replace("+", "")} />
            {item.endsWith("+") && <Caret />}
          </button>
        ))}
      </div>
    ))}
  </div>
);

const Group: FC<{ title: string; className: string; active?: boolean; children: ReactNode }> = ({
  title,
  className,
  active,
  children,
}) => (
  <section
    className={`relative flex h-20 shrink-0 flex-col rounded-sm border border-[#eef0f4] shadow-[0_0_1px_#555] ${className} ${
      active ? "bg-linear-to-b from-[#e9ebef] to-[#dfe1e7]" : "bg-linear-to-b from-[#d3d7df] via-[#b9bfcb] via-40% to-[#d5d9e1]"
    }`}
  >
    <div className="flex h-16 pt-px">{children}</div>
    <h2
      className={`flex flex-1 items-center justify-center rounded-b-sm leading-3 text-white ${
        active ? "bg-linear-to-b from-[#858585] to-[#666]" : "bg-linear-to-b from-[#a3a3a3] to-[#939393]"
      }`}
    >
      {title}
    </h2>
  </section>
);

const Watermark = () => (
  <div className="pointer-events-none absolute top-1 left-[515px] font-['DejaVu_Sans'] text-[21px] leading-6 font-bold whitespace-nowrap text-white [text-shadow:0_0_2px_#000,1px_1px_1px_#222,-1px_-1px_1px_#333,1px_-1px_1px_#333,-1px_1px_1px_#333]">
    www.BANDICAM.com
  </div>
);

const TitleBar = () => (
  <header className="relative flex h-[22px] shrink-0 items-center bg-white pl-[58px]">
    <div className="flex items-center pb-0.5">
      <Tools items="page+ open save undo+ redo+ building book camera handFlash+ blocks" />
      <button aria-label="Настройка панели" className="ml-3">
        <svg className="h-2 w-2" viewBox="0 0 8 8">
          <path d="M1 1h6M2 4h5L4.500 7z" stroke="#444" fill="#444" />
        </svg>
      </button>
    </div>
    <h1 className="ml-10 pb-1 text-[11px] leading-4 font-semibold whitespace-pre text-black">
      ПК ЛИРА-САПР  2016 R5 (некоммерческая) x64 - мк рама 2013 - [мк рама 2013.~lir]
    </h1>
    <div className="ml-auto flex pb-1">
      <button aria-label="Свернуть" className="flex w-[43px] justify-center">
        <svg className="h-3 w-3" viewBox="0 0 12 12">
          <path d="M1 6.500h10" stroke="#333" />
        </svg>
      </button>
      <button aria-label="Восстановить" className="flex w-[43px] justify-center">
        <svg className="h-3 w-3" viewBox="0 0 12 12" fill="none" stroke="#222">
          <path d="M1.500 3.500h7v7h-7zM3.500 3.500v-2h7v7h-2" />
        </svg>
      </button>
      <button aria-label="Закрыть" className="flex w-10 justify-center">
        <svg className="h-3 w-3" viewBox="0 0 12 12" fill="none" stroke="#222">
          <path d="M1 1l10 10M11 1L1 11" />
        </svg>
      </button>
    </div>
    <button aria-label="Меню приложения" className="absolute top-1 left-3 z-10">
      <svg className="h-[34px] w-[34px]" viewBox="0 0 34 34">
        <circle cx="17" cy="17" r="16" fill="#cfd3d6" stroke="#85898f" strokeWidth="1.500" />
        <path d="M3 13a14.500 14.500 0 0128 0c-8 4-20 4-28 0z" fill="#f2f3f5" />
        <path d="M6 12c4-5 12-4 17-3 5 0 7 3 5 6-2 2-5 1-5-1M7 12c0 5 5 7 6 3M10 10c5 1 9 3 14 1M13 14l1 13M17 14l1 14M21 14v13M25 16l-1 7" fill="none" stroke="#26788f" strokeWidth="2.800" />
        <path d="M6 12c4-5 12-4 17-3 5 0 7 3 5 6-2 2-5 1-5-1M7 12c0 5 5 7 6 3M10 10c5 1 9 3 14 1M13 14l1 13M17 14l1 14M21 14v13M25 16l-1 7" fill="none" stroke="#6fc0d6" strokeWidth="1.300" />
      </svg>
    </button>
    <Watermark />
  </header>
);

const ribbonTabs = ["Расширенное редактирование", "Расчет", "Анализ", "Расширенный анализ", "Железобетон", "Сталь"];

const RibbonTabs = () => (
  <nav className="flex h-[21px] shrink-0 items-end bg-[#505050] pl-[59px] text-white">
    <button className="h-5 w-[172px] shrink-0 rounded-t-sm bg-linear-to-b from-[#eceef2] to-[#d3d7df] whitespace-nowrap text-[#15171c]">
      Создание и редактирование
    </button>
    <div className="flex h-5 items-center pl-1">
      {ribbonTabs.map((tab) => (
        <button key={tab} className="px-[14px] leading-4 whitespace-nowrap">
          {tab}
        </button>
      ))}
    </div>
    <div className="relative flex h-5 w-[134px] shrink-0 items-center justify-center border-x border-[#6c6c6c]">
      <button>Стержни</button>
      <span className="absolute bottom-full left-0 mb-px flex h-[22px] w-full items-start justify-center bg-linear-to-b from-[#f8e9bd] to-[#fadc85] pt-px whitespace-nowrap text-[#fff8e0]">
        Работа со стержнями
      </span>
    </div>
    <div className="ml-auto flex h-[22px] items-center gap-1 pr-1 whitespace-nowrap">
      <button className="flex items-center gap-2">
        Стиль <Chevron d="M1 2l3 3 3-3" className="text-white" />
      </button>
      <button className="flex items-center gap-2">
        Окно <Chevron d="M1 2l3 3 3-3" className="text-white" />
      </button>
      <button aria-label="Справка" className="flex items-center">
        <Icon name="help" />
      </button>
    </div>
  </nav>
);

const Tooltip = () => (
  <div
    role="tooltip"
    className="absolute top-[84px] left-0.5 z-20 flex h-[50px] w-[270px] rounded-sm border border-[#8d8f96] bg-linear-to-b from-[#f2f3f6] to-[#d6d7dd] px-1 shadow-[2px_2px_3px_rgba(0,0,0,0.5)]"
  >
    <svg className="mt-0.5 h-8 w-8 shrink-0" viewBox="0 0 32 32" aria-hidden="true">
      {bigIcons.stiffness}
    </svg>
    <div className="pl-1 whitespace-nowrap text-[#55565c]">
      <p className="font-['Noto_Sans'] text-[10px] leading-5 font-bold text-[#3c3d44]">
        Жесткости и материалы элементов (Ctrl+R)
      </p>
      <p className="leading-3">Задание и назначение</p>
      <p className="leading-3">жесткостей и материалов</p>
    </div>
  </div>
);

const Cursor = () => (
  <svg className="pointer-events-none absolute top-3 left-7 h-8 w-8" viewBox="0 0 32 32" aria-hidden="true">
    <circle cx="15" cy="14" r="13" fill="#f57c0a" fillOpacity=".85" />
    <path d="M5 12h13M11.500 6v13" stroke="#4a2410" strokeWidth="3.500" />
    <path d="M15 13v15l4-3 3 6 2-1-3-6h5z" fill="#fff" stroke="#777" strokeWidth=".8" />
  </svg>
);

const Ribbon = () => (
  <div className="flex h-[85px] shrink-0 gap-[3px] bg-linear-to-b from-[#dde0e6] via-[#b5bbc7] via-35% to-[#dfe2e8] pt-0.5 pl-1 text-black">
    <Group title="Создание" className="w-[290px]">
      <BigButton icon="node" lines={["Добавить", "узел"]} menu className="w-[56px]" />
      <BigButton icon="element" lines={["Добавить", "элемент"]} menu className="w-[53px]" />
      <BigButton icon="sapfir" lines={["Создать в", "САПФИР"]} className="w-[54px]" />
      <SmallGrid
        columns={[
          ["grid+", "truss", "frame3d"],
          ["tube+", "cubeMove+", "formula+"],
          ["dome", "mesh+", "slab+"],
          ["nodes", "arch"],
        ]}
      />
    </Group>
    <Group title="Редактирование" className="w-[283px]">
      <BigButton icon="copy" lines={["Копирование"]} menu hotkey className="w-[86px]" />
      <BigButton icon="pack" lines={["Упаковка", "схемы"]} className="w-[50px]" />
      <BigButton icon="move" lines={["Перемещение"]} menu hotkey className="w-[84px]" />
      <SmallGrid
        columns={[
          ["scissors", "paste", "rotateCopy+"],
          ["strip", "zoomArea", "clean"],
        ]}
      />
    </Group>
    <Group title="Жесткости и связи" className="w-[139px]" active>
      <div className="relative ml-px shrink-0">
        <BigButton
          icon="stiffness"
          lines={["Жесткости"]}
          menu
          hotkey
          className="w-[66px] rounded-sm border border-[#d9b866] bg-linear-to-b from-[#fdf3d2] via-[#ffd772] via-50% to-[#fff0b8]"
        />
        <Cursor />
      </div>
      <SmallGrid
        columns={[
          ["loadTop+", "springs", "support"],
          ["cc", "plate+", "springBase"],
        ]}
      />
      <Tooltip />
    </Group>
    <Group title="Конструирование" className="w-[254px]">
      <BigButton icon="hammer" lines={["Варианты"]} hotkey className="w-[64px]" />
      <BigButton icon="concrete" lines={["Ж/б"]} hotkey className="w-[38px]" />
      <BigButton icon="steel" lines={["Сталь"]} hotkey className="w-[42px]" />
      <div className="mt-1 h-13 w-px shrink-0 bg-[#8f949f]"></div>
      <BigButton icon="blocks" lines={["Блоки"]} className="w-[48px]" />
      <div className="flex w-6 shrink-0 flex-col">
        {["barPlus", "hatchPlus", "plusMinus"].map((name) => (
          <button key={name} aria-label={name} className="flex h-[21px] items-center pl-px">
            <Icon name={name} />
          </button>
        ))}
      </div>
      <SmallGrid columns={[["tOrange", "ipOrange+"]]} />
    </Group>
    <Group title="Нагрузки" className="w-[179px]">
      <BigButton icon="loadEditor" lines={["Редактор", "загружений"]} className="w-[66px]" />
      <BigButton icon="loads" lines={["Нагрузки"]} menu className="w-[52px]" />
      <SmallGrid columns={[["bottle+", "loadLine+", "cutLoad"], ["copyFrames"]]} />
    </Group>
    <div className="h-20 w-[73px] shrink-0 rounded-sm border border-[#8d919a] bg-linear-to-b from-[#eef0f2] via-[#c9ccd3] via-50% to-[#eceef1] pt-px">
      <BigButton icon="tools" lines={["Инструменты"]} menu className="w-full" />
    </div>
  </div>
);

const menuItems = [
  "Файл",
  "Режим",
  "Вид",
  "Выбор",
  "Схема",
  "Создание",
  "Редактирование",
  "Жесткости",
  "Нагрузки",
  "Конструирование",
];

const MenuBar = () => (
  <nav className="flex h-6 shrink-0 items-center bg-[#505050] pt-0.5 text-white">
    <div className="mr-0.5 ml-1 h-3 w-0 border-l-2 border-dotted border-[#d5d5d5]"></div>
    {menuItems.map((item) => (
      <button key={item} className="px-[7px] leading-4">
        {item}
      </button>
    ))}
  </nav>
);

const DocIcon = () => (
  <svg className="h-4 w-4 shrink-0" viewBox="0 0 16 16" aria-hidden="true">
    <path d="M4 1h8l3 3v9l-3 2H4z" fill="#c4d8e2" stroke="#34505e" />
    <path d="M2 4c3-2 8-2 10 0M4 5v9M7 5v10M10 5v9M2 4v3" fill="none" stroke="#23708c" strokeWidth="1.600" />
  </svg>
);

const DocTabs = () => (
  <div className="flex h-[23px] shrink-0 items-end border-b border-[#f0f1f4] bg-linear-to-b from-[#9297a3] to-[#c5c9d2] pl-1 font-bold text-black">
    <button className="flex h-5 w-[88px] items-center gap-1.5 bg-linear-to-b from-[#d5d8df] to-[#aeb3bf] pl-[22px] font-medium [clip-path:polygon(22px_0,100%_0,74px_100%,0_100%)]">
      <DocIcon /> рама-
    </button>
    <div className="-ml-4 flex h-5 w-[138px] items-center bg-white pl-[18px] [clip-path:polygon(18px_0,100%_0,100%_100%,0_100%)]">
      <DocIcon />
      <button className="ml-2 whitespace-nowrap">мк рама 2013</button>
      <button aria-label="Закрыть вкладку" className="mr-1.5 ml-auto">
        <svg className="h-2 w-2" viewBox="0 0 8 8">
          <path d="M0 0l8 8M8 0L0 8" stroke="#333" strokeWidth="1.300" />
        </svg>
      </button>
    </div>
    <button aria-label="Список окон" className="mr-0.5 mb-2 ml-auto">
      <Caret />
    </button>
  </div>
);

const RED = "#c8202a";
const GREEN = "#128a24";

// Arrow from (x, y) towards (dx, dy)
const Arrow: FC<{ x: number; y: number; dx: number; dy: number; color: string }> = ({ x, y, dx, dy, color }) => {
  const len = Math.hypot(dx, dy);
  const ux = dx / len;
  const uy = dy / len;
  const tx = x + dx;
  const ty = y + dy;
  const wing = (side: number) => `${tx - ux * 7 - uy * 3.5 * side} ${ty - uy * 7 + ux * 3.5 * side}`;
  return (
    <path d={`M${x} ${y}L${tx} ${ty}M${wing(1)}L${tx} ${ty}L${wing(-1)}`} fill="none" stroke={color} strokeWidth="1" />
  );
};

const leftNodes = [190, 234, 280, 327, 373, 420, 467, 513, 560, 606, 650];
const rightNodes = [656, 700, 747, 793, 840, 887, 933, 980, 1026, 1073, 1117];

const Truss: FC<{ nodes: number[]; dir: 1 | -1 }> = ({ nodes, dir }) => {
  const bays = nodes.slice(1).map((b, i) => [nodes[i], b]);
  return (
    <g>
      <path d={`M${nodes[0]} 332.5H${nodes[10]}`} stroke="#e8141c" strokeWidth="2" />
      <path d={`M${nodes[0]} 381.5H${nodes[10]}`} stroke="#111" />
      {nodes
        .filter((_, i) => i % 2 === 0 || i === 10)
        .map((x) => (
          <g key={x}>
            <path d={`M${x - 0.5} 333V381`} stroke="#444" />
            <Arrow x={x - 0.5} y={362} dx={0} dy={-18} color={GREEN} />
            <Arrow x={x} y={362.5} dx={-19} dy={0} color={RED} />
          </g>
        ))}
      {bays.map(([a, b], i) => {
        const rising = i % 2 === 0;
        const edge = i === 0 || i === 9;
        const load = Math.round(dir === 1 ? a + (b - a) * 0.39 : b - (b - a) * 0.38) - 0.5;
        const mid = rising ? a + (b - a) * 0.4 : a + (b - a) * 0.6;
        return (
          <g key={a}>
            <path
              d={rising ? `M${a} 381L${b} 333` : `M${a} 333L${b} 381`}
              stroke={edge ? "#e8141c" : "#333"}
              strokeWidth={edge ? 2 : 1}
            />
            <Arrow x={mid} y={362} dx={rising ? 14 : -13} dy={-14} color={GREEN} />
            <Arrow x={mid} y={362} dx={rising ? -14 : 14} dy={-13} color={RED} />
            <Arrow x={load} y={332} dx={0} dy={-18} color={RED} />
            <Arrow x={load} y={381} dx={0} dy={-18} color={RED} />
            <Arrow x={load} y={332.5} dx={19 * dir} dy={0} color={GREEN} />
            <Arrow x={load} y={381.5} dx={19 * dir} dy={0} color={GREEN} />
            <path d={`M${load} 332.500h${19 * dir}`} stroke="#e8141c" strokeWidth="2" />
          </g>
        );
      })}
      {nodes.map((x) => (
        <g key={x} fill="#1fd024">
          <rect x={x - 1} y="331" width="3" height="3" />
          <rect x={x - 1} y="380" width="3" height="3" />
        </g>
      ))}
    </g>
  );
};

const Column: FC<{ top: number; base: number }> = ({ top, base }) => (
  <g>
    <path d={`M${top} 381V492M${base} 492V592`} stroke="#111" />
    <Arrow x={top} y={434} dx={0} dy={-18} color={GREEN} />
    <Arrow x={top} y={434.5} dx={-19} dy={0} color={RED} />
    <Arrow x={top} y={483} dx={0} dy={-18} color={GREEN} />
    <Arrow x={top} y={483.5} dx={-19} dy={0} color={RED} />
    <Arrow x={base} y={587} dx={0} dy={-18} color={GREEN} />
    <Arrow x={base} y={587.5} dx={-19} dy={0} color={RED} />
    <rect x={top - 1.5} y="491" width="3" height="3" fill="#1fd024" />
    <rect x={base - 1.5} y="491" width="3" height="3" fill="#1fd024" />
  </g>
);

const Scheme = () => (
  <svg className="h-full w-full" viewBox="6 228 1259 364" preserveAspectRatio="xMinYMin meet">
    <text x="7" y="240" fontSize="12" fontFamily="Liberation Serif" fill="#000">
      Загружение 1
    </text>
    <Truss nodes={leftNodes} dir={1} />
    <Truss nodes={rightNodes} dir={-1} />
    <Column top={186.5} base={190.5} />
    <Column top={653.5} base={653.5} />
    <Column top={1119.5} base={1116.5} />
    <Arrow x={190} y={492.5} dx={-19} dy={0} color={GREEN} />
    <Arrow x={1117} y={492.5} dx={19} dy={0} color={GREEN} />
    <Arrow x={189.5} y={492} dx={0} dy={-18} color={RED} />
    <Arrow x={1116.5} y={492} dx={0} dy={-18} color={RED} />
    <Arrow x={187.5} y={381} dx={0} dy={-18} color={RED} />
    <Arrow x={653.5} y={381} dx={0} dy={-18} color={RED} />
    <path d="M187 381.500h4M650 381.500h6M1117 381.500h3" stroke="#111" />
    <circle cx="638.500" cy="381.500" r="3" fill={GREEN} />
    <g fontFamily="DejaVu Sans" fontWeight="bold" fontSize="13">
      <text x="37" y="540" fill="#d8141c">
        Z
      </text>
      <text x="13" y="563" fill="#0d8a1c">
        X
      </text>
    </g>
    <Arrow x={42.5} y={564} dx={0} dy={-18} color="#d8141c" />
    <Arrow x={43} y={564.5} dx={-19} dy={0} color="#0d8a1c" />
  </svg>
);

const Workspace = () => (
  <main className="flex min-h-0 flex-1 flex-col border-t-2 border-l-4 border-[#84878f] border-l-[#b4b7be] bg-white">
    <div className="flex min-h-0 flex-1 pt-px pl-0.5">
      <div className="min-w-0 flex-1 overflow-hidden">
        <Scheme />
      </div>
      <div className="flex w-[15px] shrink-0 flex-col items-center bg-[#f0f0f0]">
        <button aria-label="Вверх" className="flex h-[15px] w-full items-center justify-center">
          <Chevron d="M1 6l3-3 3 3" />
        </button>
        <div className="h-[62%] w-full bg-[#cdcdcd]"></div>
        <button aria-label="Вниз" className="mt-auto flex h-4 w-full items-center justify-center">
          <Chevron d="M1 2l3 3 3-3" />
        </button>
      </div>
    </div>
    <div className="flex h-[15px] shrink-0 items-center bg-[#f0f0f0]">
      <button aria-label="Влево" className="flex h-4 w-4 items-center justify-center">
        <Chevron d="M6 1L3 4l3 3" />
      </button>
      <div className="h-[15px] flex-1">
        <div className="ml-[18%] h-[15px] w-[62%] bg-[#cbcbcb]"></div>
      </div>
      <button aria-label="Вправо" className="mr-[15px] flex h-4 w-4 items-center justify-center">
        <Chevron d="M2 1l3 3-3 3" />
      </button>
    </div>
    <div className="h-1 shrink-0 border-b border-[#b4b7be] bg-white"></div>
  </main>
);

const StatusBar = () => (
  <footer className="flex h-[22px] shrink-0 bg-linear-to-b from-[#3f414c] from-35% to-[#2d2d2e] to-35% text-[#18191c]">
    <div className="ml-auto flex w-[532px] items-center border-l border-[#d5d5d5] bg-linear-to-b from-[#c6c6c6] via-[#7d7d7f] via-50% to-[#a2a2a4] pl-1">
      <div className="flex h-5 items-center bg-[#dfe3e1]">
        <button aria-label="Редактор загружений" className="flex w-[23px] justify-center">
          <Icon name="loadNo" />
        </button>
        <button aria-label="Следующее загружение" className="flex w-[23px] justify-center">
          <Icon name="up" />
        </button>
        <button aria-label="Предыдущее загружение" className="flex w-[23px] justify-center">
          <Icon name="downGray" />
        </button>
      </div>
      <Combo label="Номер загружения" value="1." className="h-5 w-[50px] border border-[#999]" />
      <div className="mx-1 h-[18px] w-0.5 bg-[#3c3c3e]"></div>
      <button aria-label="Варианты" className="flex h-5 w-5 items-center justify-center bg-[#dfe3e1]">
        <Icon name="hammer" />
      </button>
      <Combo label="Номер варианта" value="1." className="h-5 w-[52px] border border-[#999]" />
      <span className="ml-0.5 w-[125px] border-l-2 border-[#3c3c3e] pl-1 leading-[18px]">Уз.: 0 / 61</span>
      <span className="w-[125px] border-l-2 border-[#3c3c3e] pl-1 leading-[18px]">Эл.: 24 / 90</span>
      <span className="border-l-2 border-[#3c3c3e] pl-1 leading-[18px] whitespace-nowrap">Загр.: 1 / 1</span>
    </div>
  </footer>
);

const taskIcons: { name: string; active?: boolean; art: ReactNode }[] = [
  {
    name: "Представление задач",
    art: <path d="M4 4v4h11V4M4 21v-4h11v4M4 10h11v5H4zM19 4v17M18 10h3" fill="none" stroke="#eee" strokeWidth="1.400" />,
  },
  {
    name: "Word",
    art: (
      <g>
        <path d="M5 2h14l2 2v16H5z" fill="#e6effa" stroke="#7fa5d8" />
        <path d="M2 4h15v15H2z" fill="#eaf3ff" stroke="#8fb3e0" />
        <path d="M4 7l3 9 2.500-7L12 16l3-9" fill="none" stroke="#1f55a8" strokeWidth="2.400" />
        <path d="M16 12l7 2-1 8-7-2z" fill="#fff" stroke="#8fb3e0" />
      </g>
    ),
  },
  {
    name: "AutoCAD",
    art: (
      <g>
        <path d="M1 1h22v22H1z" fill="#f4e3e1" />
        <path d="M4 20l6-16h4l5 16h-4l-1-4H9l-1 4zM10 13h3l-1.500-5z" fill="#b01f25" />
      </g>
    ),
  },
  {
    name: "Excel",
    art: (
      <g>
        <path d="M5 2h14l2 2v16H5z" fill="#e3f2e3" stroke="#7fb885" />
        <path d="M2 4h15v15H2z" fill="#e9f7e6" stroke="#7fb885" />
        <path d="M5 7l8 9M13 7l-8 9" fill="none" stroke="#2b8436" strokeWidth="2.600" />
        <path d="M14 13l8-1-1 8-7 1z" fill="#fff" stroke="#7fb885" />
      </g>
    ),
  },
  {
    name: "Проводник",
    art: (
      <g>
        <path d="M2 3h7l2 2h11v15H2z" fill="#f6cf5c" />
        <path d="M2 7h20v2H2z" fill="#e2ae37" />
        <path d="M6 22v-8h12v8h-4v-4h-4v4z" fill="#4b9fd5" />
      </g>
    ),
  },
  {
    name: "Яндекс Браузер",
    art: (
      <g>
        <circle cx="12" cy="12" r="11" fill="#f6f4f4" />
        <path d="M7 6l5 7 5-7M12 13v7" fill="none" stroke="#d8202a" strokeWidth="2.800" />
      </g>
    ),
  },
  {
    name: "ЛИРА-САПР",
    active: true,
    art: (
      <g>
        <rect x="1" y="1" width="22" height="22" rx="2" fill="#c9dbe6" />
        <path d="M3 8c5-5 11-3 16-2 4 1 3 6-1 5M5 9c1 5 4 4 4 1M7 7c4 1 7 3 11 1M9 11l1 9M12 11l1 10M16 11v9M19 12v5" fill="none" stroke="#2c6d8c" strokeWidth="2" />
      </g>
    ),
  },
  {
    name: "Bandicam",
    art: (
      <g>
        <circle cx="12" cy="12" r="9.500" fill="#111" stroke="#fff" strokeWidth="1.800" />
        <circle cx="12" cy="12" r="5.500" fill="#e8201f" />
      </g>
    ),
  },
];

const TrayIcon: FC<{ name: string; d: string; className: string }> = ({ name, d, className }) => (
  <button aria-label={name} className={`flex justify-center ${className}`}>
    <svg className="h-4 w-5" viewBox="0 0 20 16" fill="none" stroke="#f0f0f0" strokeWidth="1.300">
      <path d={d} />
    </svg>
  </button>
);

const Taskbar = () => (
  <div className="flex h-9 shrink-0 items-stretch bg-[#1e1a19] text-white">
    <button aria-label="Пуск" className="flex w-[45px] shrink-0 items-center justify-center bg-[#1b1b1c]">
      <svg className="h-4 w-4" viewBox="0 0 16 16" fill="#fff">
        <path d="M0 2.500l7-1v6H0zM8 1.400L16 0v7.500H8zM0 8.500h7v6l-7-1zM8 8.500h8V16l-8-1.400z" />
      </svg>
    </button>
    <label className="flex w-[323px] shrink-0 items-center gap-2.5 bg-[#f1f1f1] pl-2.5">
      <svg className="h-[18px] w-[18px] shrink-0" viewBox="0 0 16 16" fill="none" stroke="#333" strokeWidth="1.200">
        <circle cx="9.500" cy="6" r="5" />
        <path d="M6 9.500L.5 15" />
      </svg>
      <input
        aria-label="Поиск"
        placeholder="Введите здесь текст для поиска"
        className="w-full min-w-0 bg-transparent pt-0.5 text-[14px] outline-none placeholder:text-[#424242]"
      />
    </label>
    {taskIcons.map(({ name, active, art }) => (
      <button
        key={name}
        aria-label={name}
        className={
          active
            ? "flex w-[46px] items-center justify-center border-x-2 border-[#1e1a19] bg-[#4d4a4b]"
            : "flex w-[46px] items-center justify-center"
        }
      >
        <svg className="h-6 w-6" viewBox="0 0 24 24">
          {art}
        </svg>
      </button>
    ))}
    <div className="ml-auto flex items-center pt-0.5">
      <TrayIcon name="Скрытые значки" className="w-[22px]" d="M5 10l5-5 5 5" />
      <TrayIcon name="Батарея" className="w-[23px]" d="M8 5h9v7H6V8M2 2h4v4H3V2M4 6v4h3" />
      <TrayIcon name="Сеть" className="w-[23px]" d="M4 14C4 7 9 3 16 3M7 14c0-4 4-7 9-7M11 14c0-2 2-4 5-4M14 13h2v2h-2z" />
      <TrayIcon name="Громкость" className="w-[21px]" d="M3 6h3l4-4v12l-4-4H3zM13 6l4 4M17 6l-4 4" />
      <TrayIcon name="Клавиатура" className="w-[30px]" d="M0 3h20v10H0zM2 6h16M2 8.500h16M5 11h10" />
      <button className="w-9 text-center text-[11px]">РУС</button>
      <time className="w-[58px] text-center text-[11px] leading-4 whitespace-nowrap">
        18:52
        <br />
        04.03.2020
      </time>
      <button aria-label="Уведомления" className="flex w-[47px] justify-center">
        <svg className="h-6 w-6" viewBox="0 0 24 24">
          <path d="M3 3h16v12H10l-4 4v-4H3z" fill="#fff" />
          <path d="M6 7h10M6 10h10" stroke="#222" />
          <circle cx="17" cy="17" r="6.500" fill="#333" stroke="#999" />
          <text x="17" y="21" textAnchor="middle" fontSize="10" fill="#fff" fontFamily="Roboto">
            1
          </text>
        </svg>
      </button>
    </div>
  </div>
);

const App = () => {
  return (
    <div className="flex h-screen w-full flex-col overflow-hidden bg-[#505050] font-['Roboto','Noto_Sans',sans-serif] text-[11px]">
      <TitleBar />
      <RibbonTabs />
      <Ribbon />
      <MenuBar />
      <div className="flex shrink-0 flex-col gap-px pb-px">
        <Toolbar>
          <Tools items="page open save saveModel textPage zoomArea handStop! handFlash tableGo helpFaded listFaded flashV flashTri flashSum flashN | undo+ redo+ | axes axesDown xz+ xy+ yz+ rotate+ pencilRed pencil lens lensX funnel star gridRed blocks nodes brush frame3d sheet cube torch length windows arrowHelp bookHelp help" />
        </Toolbar>
        <Toolbar>
          <Tools items="grid truss mesh cylinder revolve | scissors box triMark nodePlus copyRed copyDark copyBlue brush |" />
          <Combo label="Вариант" value="1. Вариант 1" className="mx-px h-[18px] w-[116px]" />
          <Tools items="hammer | support loadTop springs ei hingeFaded barPlus hatchPlus plusMinus turn scissors gradient tJoint barPlus colorBars palette+ chart dotted | crossDots bBook crossFaded crossRed stackRed | up down" />
          <Combo label="Загружение" value="1. Загружение 1" className="h-[18px] w-[117px]" />
          <Tools items="loadNo" />
        </Toolbar>
      </div>
      <DocTabs />
      <Workspace />
      <div className="flex shrink-0 flex-col gap-px pt-px">
        <div className="flex">
          <Toolbar>
            <Tools items="star lensNode+ gridRed lensMinus!+ lensV lensH lensCross lensGrid lensBar+ blocks funnel swap frameUndo brushGreen | frameX frameAxes frameMid frameFaded frame3d frame3dRed | lens lensX | torch length+ pencil pencilRed" />
          </Toolbar>
          <Toolbar>
            <Tools items="axes axesDown xz+ xy+ yz+ sheet rotate+ axesRed" />
          </Toolbar>
        </div>
        <Toolbar>
          <Tools items="cube cubeTop cubeBack! cubeLeft cubeBox cubeRight cubeFront cubeBottom cubeHex" />
        </Toolbar>
      </div>
      <StatusBar />
      <Taskbar />
    </div>
  );
};

export default App;
